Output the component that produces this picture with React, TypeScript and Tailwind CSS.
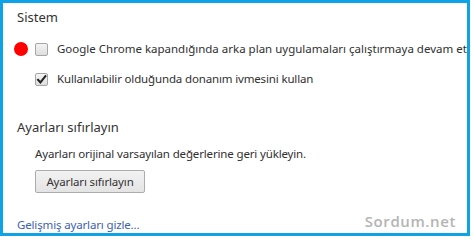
import React from "react";

function Checkbox({ checked }: { checked?: boolean }) {
  return (
    <div className="relative w-[13px] h-[13px] shrink-0 rounded-[2px] border border-[#a6a6a6] bg-gradient-to-b from-[#f4f4f4] to-[#dedede]">
      {checked && (
        <svg
          viewBox="0 0 13 13"
          className="absolute -left-px -top-px w-[13px] h-[13px]"
        >
          <path
            d="M3 6.8 L5.4 9.4 L10.4 3.2"
            fill="none"
            stroke="#222"
            strokeWidth="2"
            strokeLinecap="square"
          />
        </svg>
      )}
    </div>
  );
}

export default function App() {
  return (
    <div className="bg-white w-[474px] h-[241px] font-['Noto_Sans',sans-serif]">
      <div className="w-[470px] h-[236px] border-[3px] border-[#0ea2e6] bg-white flex flex-col text-[#303030]">
        <div className="mt-[4px] pl-[14px] h-[20px] leading-[20px] text-[13px] text-[#333]">
          Sistem
        </div>

        {/* options */}
        <div className="mt-[12px] h-[20px] flex items-center pl-[11px]">
          <div className="w-[14px] h-[14px] rounded-full bg-[#ff0000] shrink-0" />
          <div className="ml-[7px]">
            <Checkbox />
          </div>
          <span className="ml-[9px] text-[11.5px] leading-[20px] whitespace-nowrap tracking-[0px]">
            Google Chrome kapandığında arka plan uygulamaları çalıştırmaya devam et
          </span>
        </div>
        <div className="mt-[10px] h-[20px] flex items-center pl-[32px]">
          <Checkbox checked />
          <span className="ml-[9px] text-[11.5px] leading-[20px] whitespace-nowrap tracking-[-0.15px]">
            Kullanılabilir olduğunda donanım ivmesini kullan
          </span>
        </div>

        <div className="mt-[28px] pl-[14px] h-[20px] leading-[20px] text-[13px] text-[#333]">
          Ayarları sıfırlayın
        </div>
        <div className="mt-[7px] pl-[32px] h-[20px] leading-[20px] text-[11.5px] tracking-[-0.15px]">
          Ayarları orijinal varsayılan değerlerine geri yükleyin.
        </div>
        <div className="mt-[4px] pl-[32px]">
          <button className="w-[110px] h-[23px] rounded-[2px] border border-[#acacac] bg-gradient-to-b from-[#f2f2f2] to-[#e4e4e4] text-[11.5px] text-[#333] tracking-[-0.15px]">
            Ayarları sıfırlayın
          </button>
        </div>

        <div className="mt-[16px] ml-[14px] h-px bg-[#e6e6e6]" />

        <div className="flex items-start justify-between pl-[14px] pr-[11px]">
          <a className="mt-[7px] h-[18px] leading-[18px] text-[11.5px] text-[#3b62b0] tracking-[-0.15px]">
            Gelişmiş ayarları gizle...
          </a>
          <span className="mt-[2px] text-[15px] leading-[20px] font-semibold text-[#b4b4b4] font-['Open_Sans',sans-serif] tracking-[0.6px]">
            Sordum.net
          </span>
        </div>
      </div>
    </div>
  );
}
